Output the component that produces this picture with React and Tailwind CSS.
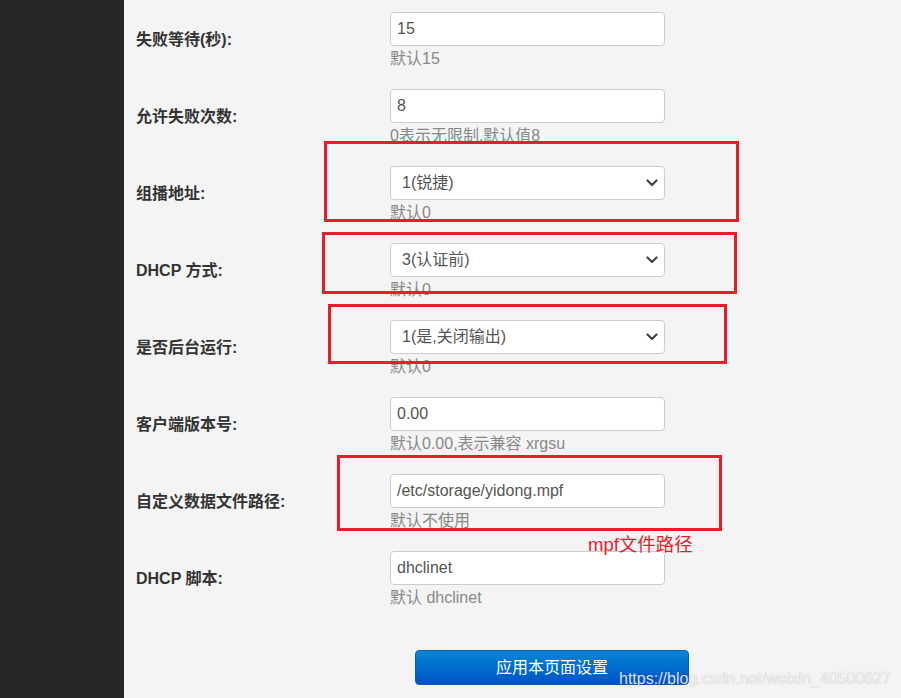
import React from "react";

const font = { fontFamily: '"Liberation Sans", "Noto Sans CJK SC", sans-serif' };

function Chevron() {
  return (
    <svg width="12" height="8" viewBox="0 0 12 8" className="shrink-0">
      <path d="M1.5 1.5 L6 6 L10.5 1.5" fill="none" stroke="#444" strokeWidth="2.2" strokeLinecap="round" strokeLinejoin="round" />
    </svg>
  );
}

const rows = [
  { label: "失败等待(秒):", value: "15", hint: "默认15" },
  { label: "允许失败次数:", value: "8", hint: "0表示无限制,默认值8" },
  { label: "组播地址:", value: "1(锐捷)", hint: "默认0", select: true },
  { label: "DHCP 方式:", value: "3(认证前)", hint: "默认0", select: true },
  { label: "是否后台运行:", value: "1(是,关闭输出)", hint: "默认0", select: true },
  { label: "客户端版本号:", value: "0.00", hint: "默认0.00,表示兼容 xrgsu" },
  { label: "自定义数据文件路径:", value: "/etc/storage/yidong.mpf", hint: "默认不使用" },
  { label: "DHCP 脚本:", value: "dhclinet", hint: "默认 dhclinet" },
];

function Row({ label, value, hint, select }) {
  return (
    <div className="grid grid-cols-[254px_275px] items-center py-[11px]">
      <div className="text-[16px] font-bold text-[#333]">{label}</div>
      <div className="flex flex-col">
        <div className="flex h-[34px] items-center justify-between rounded-[4px] border border-[#ccc] bg-white text-[16px] text-[#555]">
          <span className={select ? "pl-[11px]" : "pl-[6px]"}>{value}</span>
          {select && (
            <span className="pr-[6px]">
              <Chevron />
            </span>
          )}
        </div>
        <div className="h-[21px] text-[16px] leading-[26px] text-[#888]">{hint}</div>
      </div>
    </div>
  );
}

export default function App() {
  return (
    <div className="relative flex h-[698px] w-[901px] overflow-hidden bg-[#f4f4f4]" style={font}>
      <div className="w-[124px] shrink-0 bg-[#262626]" />
      <div className="flex flex-col pl-[12px] pt-[1px]">
        {rows.map((r) => (
          <Row key={r.label} {...r} />
        ))}
        <div className="pt-[33px] pl-[279px]">
          <button className="h-[35px] w-[274px] rounded-[4px] border border-[#0a5cc0] bg-gradient-to-b from-[#0b86d6] to-[#0052c6] text-[16px] text-white">
            应用本页面设置
          </button>
        </div>
      </div>

      {/* annotation boxes */}
      <div className="pointer-events-none absolute left-[324px] top-[141px] h-[81px] w-[415px] border-[3px] border-[#ea1c2a]" />
      <div className="pointer-events-none absolute left-[322px] top-[232px] h-[62px] w-[415px] border-[3px] border-[#ea1c2a]" />
      <div className="pointer-events-none absolute left-[328px] top-[304px] h-[60px] w-[399px] border-[3px] border-[#ea1c2a]" />
      <div className="pointer-events-none absolute left-[337px] top-[455px] h-[76px] w-[385px] border-[3px] border-[#ea1c2a]" />
      <div className="absolute left-[588px] top-[531px] text-[18.5px] text-[#ea1c2a]">mpf文件路径</div>

      <div
        className="absolute left-[619px] top-[667px] text-[16px] text-white/85"
        style={{ textShadow: "0 0 1px rgba(0,0,0,0.35)" }}
      >
        https://blog.csdn.net/weixin_40500627
      </div>
    </div>
  );
}
